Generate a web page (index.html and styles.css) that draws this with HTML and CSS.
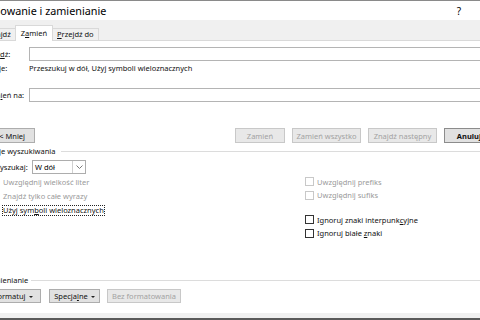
FILE: index.html
```html
<!DOCTYPE html>
<html lang="pl">
<head>
<meta charset="UTF-8" />
<meta name="viewport" content="width=device-width, initial-scale=1" />
<title>Znajdowanie i zamienianie</title>
<link rel="stylesheet" href="styles.css">
</head>
<body>
  <div class="dialog" role="dialog" aria-label="Znajdowanie i zamienianie">
    <div class="titlebar">
      <span class="title">Znajdowanie i zamienianie</span>
      <span class="title-btn help">?</span>
      <span class="title-btn close">✕</span>
    </div>

    <div class="tabstrip" role="tablist">
      <span class="tab" role="tab">Znajdź</span>
      <span class="tab active" role="tab">Z<u>a</u>mień</span>
      <span class="tab" role="tab"><u>P</u>rzejdź do</span>
    </div>

    <div class="panel">
      <div class="field-row">
        <label class="field-label" for="findInput">Znaj<u>d</u>ź:</label>
        <input class="text-field" type="text" id="findInput" autocomplete="off" />
      </div>
      <div class="field-row info-row">
        <span class="field-label">Opcje:</span>
        <span class="info-text">Przeszukuj w dół, Użyj symboli wieloznacznych</span>
      </div>
      <div class="field-row replace-row">
        <label class="field-label" for="replaceInput">Zam<u>i</u>eń na:</label>
        <input class="text-field" type="text" id="replaceInput" autocomplete="off" />
      </div>

      <div class="button-row">
        <button class="btn btn-less">&lt;&lt; Mniej</button>
        <button class="btn btn-replace" disabled>Zamień</button>
        <button class="btn btn-mid" disabled>Zamień wszystko</button>
        <button class="btn btn-mid" disabled>Znajdź następny</button>
        <button class="btn btn-cancel">Anuluj</button>
      </div>

      <div class="legend">Opcje wyszukiwania</div>

      <div class="options">
        <div class="options-left">
          <div class="search-row">
            <label class="search-label">Wyszukaj:</label>
            <div class="select">
              <span class="select-value">W dół</span>
              <span class="select-arrow">
                <svg width="7" height="4" viewBox="0 0 7 4"><path d="M0.5 0.5 L3.5 3.5 L6.5 0.5" fill="none" stroke="#7a7a7a" stroke-width="1"/></svg>
              </span>
            </div>
          </div>
          <div class="check first disabled"><span class="box"></span><span>Uwzględnij wielkość liter</span></div>
          <div class="check disabled"><span class="box"></span><span>Znajdź tylko całe wyrazy</span></div>
          <div class="check"><span class="box"></span><span class="focused">Użyj sym<u>b</u>oli wieloznacznych</span></div>
        </div>
        <div class="options-right">
          <div class="check disabled"><span class="box"></span><span>Uwzględnij prefiks</span></div>
          <div class="check disabled"><span class="box"></span><span>Uwzględnij sufiks</span></div>
          <div class="check spaced"><span class="box"></span><span>Ignoruj znaki interpunk<u>c</u>yjne</span></div>
          <div class="check"><span class="box"></span><span>Ignoruj białe <u>z</u>naki</span></div>
        </div>
      </div>

      <div class="replace-section">
        <div class="legend legend-short">Zamienianie</div>
        <div class="button-row small">
          <button class="btn btn-format drop">Formatuj</button>
          <button class="btn btn-special drop">Specja<u>l</u>ne</button>
          <button class="btn btn-plain" disabled>Bez formatowania</button>
        </div>
      </div>
    </div>

    <div class="dialog-bottom"></div>
  </div>
</body>
</html>
```

FILE: styles.css
```css
/* Reset and base */
* {
  box-sizing: border-box;
}
body {
  margin: 0;
  width: 480px;
  height: 320px;
  overflow: hidden;
  background: #f0f0f0;
  font-family: "Segoe UI", "Noto Sans", sans-serif;
  font-size: 7.5px;
  color: #111;
}
u {
  text-decoration-thickness: 1px;
}

/* Window */
.dialog {
  margin-left: -36px;
  width: 560px;
  border-top: 1px solid #8a8a8a;
}
.titlebar {
  height: 19px;
  display: flex;
  align-items: center;
  background: #fff;
  padding-left: 8px;
  font-size: 10.8px;
  color: #000;
}
.title {
  flex: 1;
}
.title-btn {
  text-align: center;
  font-size: 10px;
}
.help {
  width: 30px;
}
.close {
  width: 50px;
}

/* Tabs */
.tabstrip {
  height: 21px;
  display: flex;
  align-items: flex-end;
  padding-left: 18px;
  background: #f0f0f0;
  border-bottom: 1px solid #d9d9d9;
}
.tab {
  height: 12px;
  line-height: 11px;
  padding: 0 4.5px;
  border: 1px solid #d9d9d9;
  border-bottom: none;
  margin-right: -1px;
  background: #f0f0f0;
  color: #111;
}
.tab.active {
  height: 16px;
  line-height: 14px;
  margin-bottom: -1px;
  background: #fff;
  position: relative;
}

/* Panel */
.panel {
  height: 272px;
  background: #fff;
  padding: 6px 30px 10px 21px;
  display: flex;
  flex-direction: column;
}
.field-row {
  display: flex;
  align-items: center;
  height: 14px;
}
.field-label {
  width: 44px;
  flex-shrink: 0;
}
.text-field {
  flex: 1;
  height: 14px;
  margin: 0;
  border: 1px solid #b4b4b4;
  background: #fff;
  font: inherit;
  outline: none;
}
.info-row {
  height: 13px;
}
.replace-row {
  margin-top: 14px;
}

/* Buttons */
.button-row {
  display: flex;
  gap: 7px;
  margin-top: 26px;
  height: 15px;
}
.btn {
  height: 15px;
  margin: 0;
  padding: 0;
  border: 1px solid #adadad;
  background: #e1e1e1;
  font: inherit;
  color: #111;
  white-space: nowrap;
}
.btn:disabled {
  background: #e8e8e8;
  border-color: #c8c8c8;
  color: #a2a2a2;
}
.btn-less {
  width: 50px;
  text-align: right;
  padding-right: 9px;
}
.btn-replace {
  width: 50px;
  margin-left: 193px;
}
.btn-mid {
  width: 69px;
}
.btn-cancel {
  width: 50px;
  font-weight: 700;
  border-color: #8c8c8c;
}
.button-row.small {
  margin-top: 4px;
  height: 14px;
  gap: 8px;
}
.button-row.small .btn {
  height: 14px;
}
.btn-format {
  width: 56px;
}
.btn-special {
  width: 51px;
}
.button-row.small .btn-plain {
  width: 74px;
  margin-left: -1px;
}
.drop::after {
  content: "";
  display: inline-block;
  margin-left: 3px;
  vertical-align: middle;
  border-left: 2px solid transparent;
  border-right: 2px solid transparent;
  border-top: 2.5px solid #222;
}

/* Group headings */
.legend {
  display: flex;
  align-items: center;
  height: 10px;
  margin-top: 3px;
}
.legend::after {
  content: "";
  flex: 1;
  border-top: 1px solid #dcdcdc;
  margin-left: 6px;
}
.legend-short::after {
  margin-left: 3px;
}

/* Search options */
.options {
  display: flex;
  margin-top: 4px;
}
.options-left {
  width: 320px;
  flex-shrink: 0;
}
.search-row {
  display: flex;
  align-items: center;
  height: 14px;
  padding-left: 8px;
}
.search-label {
  width: 39px;
}
.select {
  display: flex;
  width: 54px;
  height: 14px;
  border: 1px solid #adadad;
  background: #fff;
}
.select-value {
  flex: 1;
  padding-left: 2px;
  line-height: 12px;
  color: #000;
}
.select-arrow {
  width: 13px;
  display: flex;
  align-items: center;
  justify-content: center;
  border-left: 1px solid #d0d0d0;
}
.check {
  display: flex;
  align-items: center;
  height: 14px;
  padding-left: 6px;
}
.check.first {
  margin-top: 1px;
}
.box {
  width: 9px;
  height: 9px;
  margin-right: 3px;
  border: 1px solid #333;
  background: #fff;
  flex-shrink: 0;
}
.check.disabled {
  color: #9a9a9a;
}
.check.disabled .box {
  border-color: #c8c8c8;
}
.focused {
  outline: 1px dotted #222;
  line-height: 9px;
}
.options-right {
  margin-top: 15px;
}
.options-right .check {
  height: 13.5px;
  padding-left: 0;
}
.options-right .check.spaced {
  margin-top: 11px;
}
.replace-section {
  margin-top: auto;
}

.dialog-bottom {
  height: 7px;
  background: #f0f0f0;
  border-bottom: 2px solid #5a5a5a;
}
```
